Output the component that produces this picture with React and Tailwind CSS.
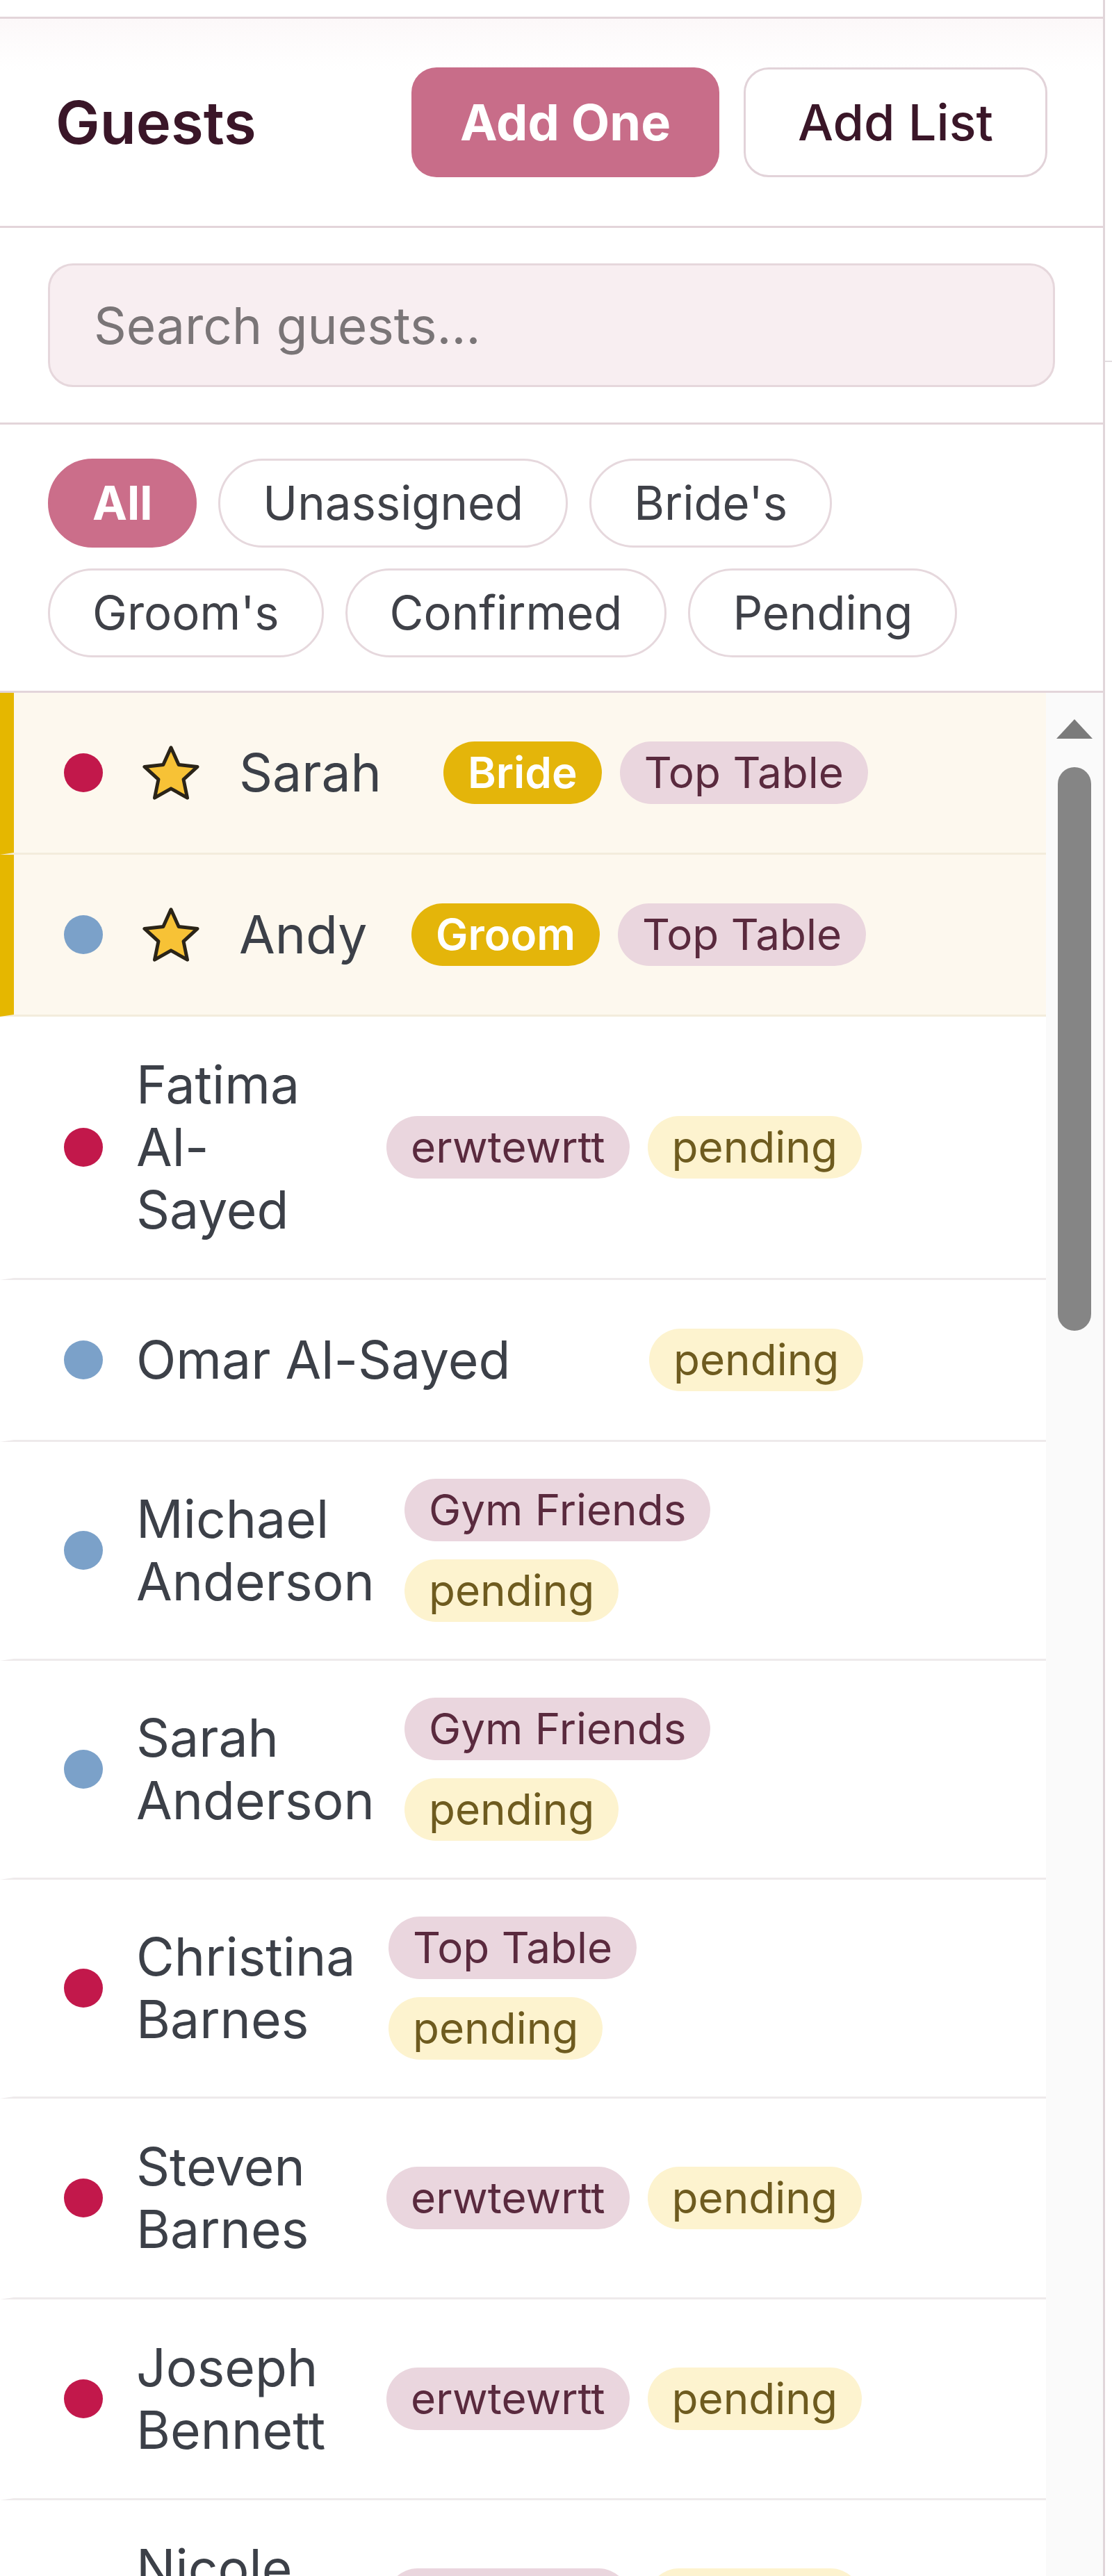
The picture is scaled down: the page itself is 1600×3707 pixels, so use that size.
import React from 'react';

const DOT = {
  red: 'bg-[#c2184b]',
  blue: 'bg-[#7ba1c9]',
};

const TAG = {
  gold: 'bg-[#e4b50a] text-white font-semibold',
  pink: 'bg-[#ead6de] text-[#5a2a3e]',
  yellow: 'bg-[#fdf3cf] text-[#6e5b1f]',
};

const guests = [
  { name: 'Sarah', dot: 'red', star: true, hl: true, nameW: 'w-[248px]', ml: 'ml-[46px]', tags: [['Bride', 'gold'], ['Top Table', 'pink']] },
  { name: 'Andy', dot: 'blue', star: true, hl: true, nameW: 'w-[202px]', ml: 'ml-[46px]', tags: [['Groom', 'gold'], ['Top Table', 'pink']] },
  { name: 'Fatima Al-Sayed', dot: 'red', nameW: 'w-[280px]', ml: 'ml-[80px]', tags: [['erwtewrtt', 'pink'], ['pending', 'yellow']] },
  { name: 'Omar Al-Sayed', dot: 'blue', nameW: 'w-[692px]', ml: 'ml-[46px]', tags: [['pending', 'yellow']] },
  { name: 'Michael Anderson', dot: 'blue', nameW: 'w-[346px]', ml: 'ml-[40px]', wrap: true, tags: [['Gym Friends', 'pink'], ['pending', 'yellow']] },
  { name: 'Sarah Anderson', dot: 'blue', nameW: 'w-[346px]', ml: 'ml-[40px]', wrap: true, tags: [['Gym Friends', 'pink'], ['pending', 'yellow']] },
  { name: 'Christina Barnes', dot: 'red', nameW: 'w-[322px]', ml: 'ml-[41px]', wrap: true, tags: [['Top Table', 'pink'], ['pending', 'yellow']] },
  { name: 'Steven Barnes', dot: 'red', nameW: 'w-[314px]', ml: 'ml-[46px]', tags: [['erwtewrtt', 'pink'], ['pending', 'yellow']] },
  { name: 'Joseph Bennett', dot: 'red', nameW: 'w-[314px]', ml: 'ml-[46px]', tags: [['erwtewrtt', 'pink'], ['pending', 'yellow']] },
  { name: 'Nicole Bennett', dot: 'red', nameW: 'w-[314px]', ml: 'ml-[46px]', tags: [['erwtewrtt', 'pink'], ['pending', 'yellow']] },
];

function Star() {
  return (
    <svg className="ml-[48px] shrink-0" width="100" height="100" viewBox="0 0 100 100">
      <polygon
        points="50,13.8 61.17,38.43 88.04,41.44 68.07,59.67 73.51,86.16 50,72.8 26.49,86.16 31.93,59.67 11.96,41.44 38.83,38.43"
        fill="#f7c236"
        stroke="#2a2418"
        strokeWidth="5"
        strokeLinejoin="round"
      />
    </svg>
  );
}

function Tag({ text, kind }) {
  return (
    <span className={`inline-flex h-[90px] items-center whitespace-nowrap rounded-full px-[35px] text-[62px] leading-none ${TAG[kind]}`}>
      {text}
    </span>
  );
}

function Row({ g }) {
  return (
    <div
      className={`flex items-center border-b-[3px] border-l-[20px] py-[53px] pl-[72px] ${
        g.hl ? 'border-l-[#e5b700] border-b-[#f3ecdc] bg-[#fdf8ee]' : 'border-l-transparent border-b-[#eeeaeb] bg-white'
      }`}
    >
      <div className="flex min-h-[124px] flex-1 items-center">
        <span className={`h-[56px] w-[56px] shrink-0 rounded-full ${DOT[g.dot]}`} />
        {g.star && <Star />}
        <div className={`ml-[48px] shrink-0 text-[75px] leading-[90px] text-[#3c4048] ${g.nameW}`}>{g.name}</div>
        <div className={`flex gap-[26px] ${g.ml} ${g.wrap ? 'w-[480px] flex-wrap' : 'flex-nowrap'}`}>
          {g.tags.map(([t, k]) => (
            <Tag key={t} text={t} kind={k} />
          ))}
        </div>
      </div>
    </div>
  );
}

const chips = ['All', 'Unassigned', "Bride's", "Groom's", 'Confirmed', 'Pending'];

export default function App() {
  return (
    <div className="flex h-[3707px] w-[1600px] overflow-hidden bg-white font-['Inter','Noto_Sans',sans-serif]">
      <div className="flex w-[1590px] shrink-0 flex-col border-r-[3px] border-[#e1d6da]">
        <div className="h-[24px] shrink-0" />
        <div className="flex items-center justify-between border-y-[3px] border-[#e3d5da] bg-linear-to-b from-[#fcf8f9] to-white to-[25%] px-[80px] py-[70px]">
          <h2 className="text-[85px] font-semibold leading-none text-[#3a1628]">Guests</h2>
          <div className="flex gap-[35px]">
            <button className="flex h-[158px] w-[443px] items-center justify-center rounded-[36px] bg-[#c86d89] text-[72px] font-bold text-white">
              Add One
            </button>
            <button className="flex h-[158px] w-[437px] items-center justify-center rounded-[36px] border-[3px] border-[#e2d3d9] bg-white text-[72px] font-medium text-[#3a1628]">
              Add List
            </button>
          </div>
        </div>

        <div className="border-b-[3px] border-[#e3d5da] px-[69px] py-[51px]">
          <input
            className="h-[178px] w-full rounded-[36px] border-[3px] border-[#e6d7dc] bg-[#f8eef1] pl-[63px] text-[73px] text-[#3c4048] outline-none placeholder:text-[#7a7577]"
            placeholder="Search guests..."
          />
        </div>

        <div className="border-b-[3px] border-[#e3d5da] px-[69px] pb-[48px] pt-[49px]">
          <div className="flex flex-wrap gap-x-[31px] gap-y-[30px]">
            {chips.map((c) =>
              c === 'All' ? (
                <span key={c} className="flex h-[128px] items-center rounded-full border-[3px] border-[#cb6e8a] bg-[#cb6e8a] px-[61px] text-[67px] font-bold text-white">
                  {c}
                </span>
              ) : (
                <span key={c} className="flex h-[128px] items-center rounded-full border-[3px] border-[#e6d8dd] bg-white px-[61px] text-[67px] text-[#3f4148]">
                  {c}
                </span>
              )
            )}
          </div>
        </div>

        <div className="flex min-h-0 flex-1">
          <div className="min-w-0 flex-1 overflow-hidden">
            {guests.map((g) => (
              <Row key={g.name} g={g} />
            ))}
          </div>
          <div className="flex w-[82px] shrink-0 flex-col items-center bg-[#fafafa] pt-[38px]">
            <svg width="52" height="28" viewBox="0 0 52 28">
              <polygon points="26,0 52,28 0,28" fill="#7b7b7b" />
            </svg>
            <div className="mt-[41px] h-[811px] w-[48px] rounded-full bg-[#858585]" />
          </div>
        </div>
      </div>
      <div className="flex-1">
        <div className="mt-[519px] h-[2px] bg-[#e3dde0]" />
      </div>
    </div>
  );
}
